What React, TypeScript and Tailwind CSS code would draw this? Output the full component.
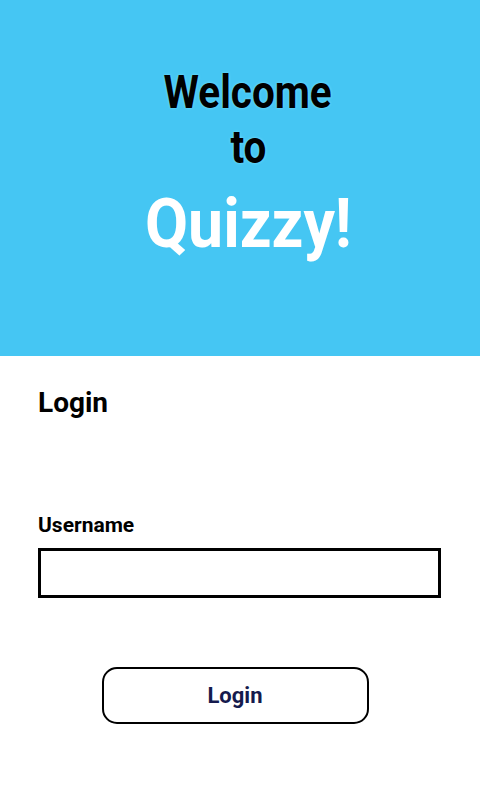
export default function App() {
  return (
    <div className="w-[480px] h-[800px] bg-white font-['Roboto',sans-serif]">
      <div className="h-[356px] bg-[#45c6f3] flex flex-col items-center pt-[64px] pl-[16px]">
        <span className="inline-block scale-x-[0.88] text-[46px] leading-[56px] font-bold text-black [text-shadow:0_0_3px_#7fe0ff]">
          Welcome
        </span>
        <span className="inline-block scale-x-[0.88] text-[46px] leading-[54px] font-bold text-black [text-shadow:0_0_3px_#7fe0ff]">
          to
        </span>
        <span className="inline-block scale-x-[0.92] text-[68px] leading-[80px] font-bold text-white mt-[10px]">
          Quizzy!
        </span>
      </div>

      <div className="px-[38px]">
        <h1 className="mt-[30px] text-[28px] leading-[34px] font-bold text-black">Login</h1>

        <label className="block mt-[93px] text-[21px] leading-[24px] font-bold text-black">Username</label>
        <input className="block mt-[11px] w-[403px] h-[50px] border-[3px] border-black bg-white outline-none px-2" />

        <div className="flex justify-center pr-[10px] mt-[69px]">
          <button className="w-[267px] h-[57px] rounded-[15px] border-[2.5px] border-black text-[22px] font-bold text-[#151a4d]">
            Login
          </button>
        </div>
      </div>
    </div>
  );
}
